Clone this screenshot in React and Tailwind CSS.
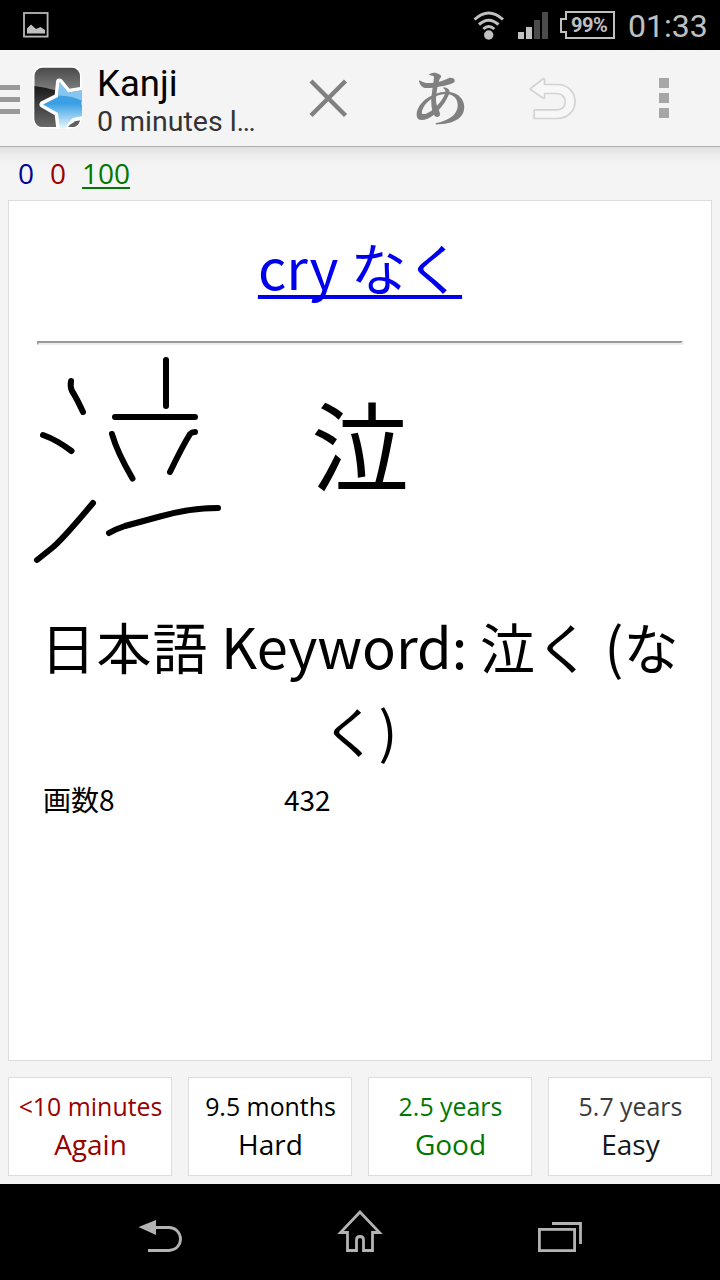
const answers = [
  { time: "<10 minutes", label: "Again", timeColor: "text-[#990000]", labelColor: "text-[#990000]" },
  { time: "9.5 months", label: "Hard", timeColor: "text-black", labelColor: "text-black" },
  { time: "2.5 years", label: "Good", timeColor: "text-[#007700]", labelColor: "text-[#007700]" },
  { time: "5.7 years", label: "Easy", timeColor: "text-[#3b3b3b]", labelColor: "text-[#111820]" },
];

function StatusBar() {
  return (
    <div className="flex h-[50px] shrink-0 items-center bg-black pl-[23px] text-[#c0c0c0]">
      <svg width="26" height="26" viewBox="0 0 26 26" className="shrink-0">
        <rect x="1" y="1" width="23.600" height="23.600" fill="none" stroke="#b8b8b8" strokeWidth="1.800" />
        <path d="M4 21.500V16.500L8 12.500 13 17 17.500 15 22 18V21.500z" fill="currentColor" />
      </svg>
      <svg width="32" height="32" viewBox="0 0 32 32" className="ml-[424px] shrink-0" fill="none" stroke="currentColor" strokeWidth="3">
        <path d="M1.500 10.500Q15.700-2.500 30 10.500M6 15.500Q15.700 7 25.500 15.500M10.300 20Q15.700 15 21.300 20" />
        <circle cx="15.700" cy="26" r="4.700" fill="currentColor" stroke="none" />
      </svg>
      <svg width="30" height="28" viewBox="0 0 30 28" className="ml-[13px] shrink-0" fill="currentColor">
        <path d="M0 21h6v7H0zM8 16h6v12H8z" />
        <path d="M16 9h6v19h-6zM24 1h6v27h-6z" fill="#4b4b4b" />
      </svg>
      <div className="relative ml-[12px] h-[28px] w-[56px] shrink-0">
        <svg width="56" height="28" viewBox="0 0 56 28" fill="none" stroke="currentColor" strokeWidth="2">
          <path d="M6 1h48v26H6v-6H1V8h5z" />
        </svg>
        <span className="absolute left-[11px] top-[3px] font-['Roboto',sans-serif] text-[20px] font-bold leading-[23px] tracking-[-0.5px]">99%</span>
      </div>
      <span className="ml-[12px] pt-[3px] font-['Roboto',sans-serif] text-[32px] leading-[47px] whitespace-nowrap">01:33</span>
    </div>
  );
}

function AnkiLogo() {
  return (
    <svg width="50" height="64" viewBox="0 0 50 64" className="ml-[13px] shrink-0">
      <defs>
        <linearGradient id="tile" x1="0" y1="0" x2="0" y2="1">
          <stop offset="0" stopColor="#484848" />
          <stop offset="0.350" stopColor="#7a7a7a" />
          <stop offset="1" stopColor="#7a7a7a" />
        </linearGradient>
        <linearGradient id="shade" x1="0" y1="0" x2="0" y2="1">
          <stop offset="0" stopColor="#191919" />
          <stop offset="1" stopColor="#707070" />
        </linearGradient>
        <linearGradient id="star" x1="0" y1="0" x2="0" y2="1">
          <stop offset="0" stopColor="#82c4ee" />
          <stop offset="0.300" stopColor="#3f9fe4" />
          <stop offset="0.450" stopColor="#3a9fe4" />
          <stop offset="0.950" stopColor="#e2f4fd" />
        </linearGradient>
        <clipPath id="outer"><rect x="0" y="0" width="49" height="62.500" /></clipPath>
        <clipPath id="tileClip"><rect x="1.500" y="1.800" width="45.500" height="59.200" rx="8" /></clipPath>
      </defs>
      <rect x="0" y="0" width="48.500" height="62.500" rx="9.500" fill="#fff" />
      <g clipPath="url(#tileClip)">
        <rect x="1" y="1" width="46" height="61" fill="url(#tile)" />
        <path d="M0 20Q24 22 50 36V64H0z" fill="url(#shade)" />
      </g>
      <g clipPath="url(#outer)">
        <path d="M26.500 16 35 26.500 51 24V32Q46 37 51 43V50L40 52Q35 56 32 64H27L25 47 10 38.500 25 31z" fill="#fff" stroke="#fff" strokeWidth="7" strokeLinejoin="round" />
        <path d="M26.500 16 35 26.500 51 24V32Q46 37 51 43V50L40 52Q35 56 32 64H27L25 47 10 38.500 25 31z" fill="url(#star)" />
        <path d="M26.500 16 35 26.500 51 24V36Q42 30 25.200 29.500z" fill="#86c5ef" />
        <path d="M35 61Q38 56 46 55.500Q45 60 40 61z" fill="#606060" />
      </g>
    </svg>
  );
}

function ActionBar() {
  return (
    <div className="flex h-[97px] shrink-0 items-center border-b border-[#adadad] bg-[#f4f4f4]">
      <div className="flex w-5 shrink-0 flex-col gap-[7px] pt-[3px]">
        <div className="h-[5px] bg-[#999]" />
        <div className="h-[5px] bg-[#999]" />
        <div className="h-[5px] bg-[#999]" />
      </div>
      <AnkiLogo />
      <div className="ml-[14px] flex w-[176px] shrink-0 flex-col pt-[4px] font-['Roboto',sans-serif]">
        <span className="text-[36.500px] leading-[42px] text-black">Kanji</span>
        <span className="text-[28.500px] leading-[33px] text-[#333]">0 minutes l…</span>
      </div>
      <svg width="110" height="96" viewBox="0 0 110 96" className="shrink-0" stroke="#808080" strokeWidth="4.400" strokeLinecap="butt">
        <path d="M38 31 72.500 65.500M72.500 31 38 65.500" />
      </svg>
      <div className="flex w-[114px] shrink-0 justify-center pb-[4px] font-['Noto_Serif_CJK_JP','Noto_Sans_CJK_JP',serif] text-[59px] font-bold leading-[90px] text-[#808080]">あ</div>
      <svg width="112" height="96" viewBox="0 0 112 96" className="shrink-0" fill="#f7f7f7" stroke="#d3d3d3" strokeWidth="1.700" strokeLinejoin="round">
        <path d="M33.500 38.500 46 29Q47.500 28 47.500 30V34.500H60C84 34.500 84 68.500 60 68.500H37.200V59.800H60C71 60 71 43.500 60 43.500H47.500V47Q47.500 49 46 48L33.500 39.500z" />
      </svg>
      <div className="ml-[50px] flex w-[10px] shrink-0 flex-col gap-[5px]">
        <div className="h-[10px] bg-[#a6a6a6]" />
        <div className="h-[10px] bg-[#a6a6a6]" />
        <div className="h-[10px] bg-[#a6a6a6]" />
      </div>
    </div>
  );
}

function Counts() {
  return (
    <div className="flex h-[53px] shrink-0 gap-4 bg-linear-to-b from-[#dfdfdf] via-[#eeeeee] via-15% to-[#f4f4f4] to-40% pl-[18px] pt-[7px] font-['Open_Sans',sans-serif] text-[28px] leading-[38px]">
      <span className="text-[#000099]">0</span>
      <span className="text-[#990000]">0</span>
      <span className="text-[#007700] underline decoration-[1.500px] underline-offset-[3px]">100</span>
    </div>
  );
}

function StrokeDiagram() {
  return (
    <svg width="200" height="216" viewBox="28 352 200 216" className="ml-[-9px] shrink-0" fill="none" stroke="#000" strokeWidth="6" strokeLinecap="round" strokeLinejoin="round">
      <path d="M71 381Q70 387 72 391Q76 397 83 412" />
      <path d="M43 435Q57 440 71.500 451" />
      <path d="M37 560L52 548Q62 540 93 503" />
      <path d="M166 360V406" />
      <path d="M115 417H195" />
      <path d="M112 434Q117 452 132.500 478.500" />
      <path d="M170 472Q182 447 190 434Q192 432 195 432" />
      <path d="M109 533Q116 529 125 526L160 516.500Q190 508 218 508" />
    </svg>
  );
}

function Ja({ children }) {
  return <span className="text-[55px] leading-none tracking-[1px]">{children}</span>;
}

function Card() {
  return (
    <div className="mx-2 flex h-[861px] shrink-0 flex-col border border-[#dcdcdc] bg-white px-7 pt-7 font-['Noto_Sans_CJK_JP',sans-serif] text-black">
      <div className="flex h-[78px] justify-center">
        <a href="#" className="text-[55.600px] leading-[75px] whitespace-nowrap text-[#0000ee] underline decoration-[4px] underline-offset-[5px] [text-decoration-skip-ink:none]">cry なく</a>
      </div>
      <div className="mt-[34px] h-[4px] border-2 border-t-[#999b99] border-r-[#eee] border-b-[#eee] border-l-[#999b99]" />
      <div className="mt-[7px] flex h-[251px]">
        <StrokeDiagram />
        <span className="ml-[83px] mt-[20px] text-[98px] leading-[139px]">泣</span>
      </div>
      <div className="mx-[-8px] flex flex-col items-center text-[56px] leading-[84px] whitespace-nowrap">
        <span><Ja>日本語</Ja> Keyword: <Ja>泣く</Ja> (<Ja>な</Ja></span>
        <span><Ja>く</Ja>)</span>
      </div>
      <div className="mt-[8px] flex pl-[6px] text-[28px] leading-[41px]">
        <span className="w-[241px]">画数8</span>
        <span>432</span>
      </div>
    </div>
  );
}

function NavBar() {
  return (
    <div className="flex h-[96px] shrink-0 items-center justify-center gap-[152px] bg-black">
      <svg width="48" height="48" viewBox="136 1208 48 48" fill="none" stroke="#b3b3b3" strokeWidth="2.800">
        <path d="M138.500 1227 156 1220V1235z" fill="#b3b3b3" stroke="none" />
        <path d="M155 1227.500H169A11.500 11.500 0 0 1 169 1250.500H148" />
      </svg>
      <svg width="48" height="48" viewBox="336 1208 48 48" fill="none" stroke="#b3b3b3" strokeWidth="2.800">
        <path d="M360 1212 340.500 1232.500H347.500V1250.500H356.500V1240Q356.500 1236.500 360 1236.500T363.500 1240V1250.500H372.500V1232.500H379.500z" />
      </svg>
      <svg width="48" height="48" viewBox="536 1208 48 48" fill="none" stroke="#b3b3b3" strokeWidth="2.800">
        <rect x="539.400" y="1229.400" width="35.200" height="21.200" />
        <path d="M552 1223.500H580.500V1244" />
      </svg>
    </div>
  );
}

export default function App() {
  return (
    <div className="flex h-[1280px] w-[720px] flex-col overflow-hidden bg-[#f4f4f4]">
      <StatusBar />
      <ActionBar />
      <Counts />
      <Card />
      <div className="mt-4 mb-2 grid h-[99px] shrink-0 grid-cols-4 gap-4 px-2 font-['Open_Sans',sans-serif]">
        {answers.map((a) => (
          <button key={a.label} className="flex flex-col items-center border border-[#dcdcdc] bg-white pt-[10px] pl-px whitespace-nowrap">
            <span className={`text-[24.900px] leading-[37px] ${a.timeColor}`}>{a.time}</span>
            <span className={`text-[28px] leading-[38px] ${a.labelColor}`}>{a.label}</span>
          </button>
        ))}
      </div>
      <NavBar />
    </div>
  );
}
